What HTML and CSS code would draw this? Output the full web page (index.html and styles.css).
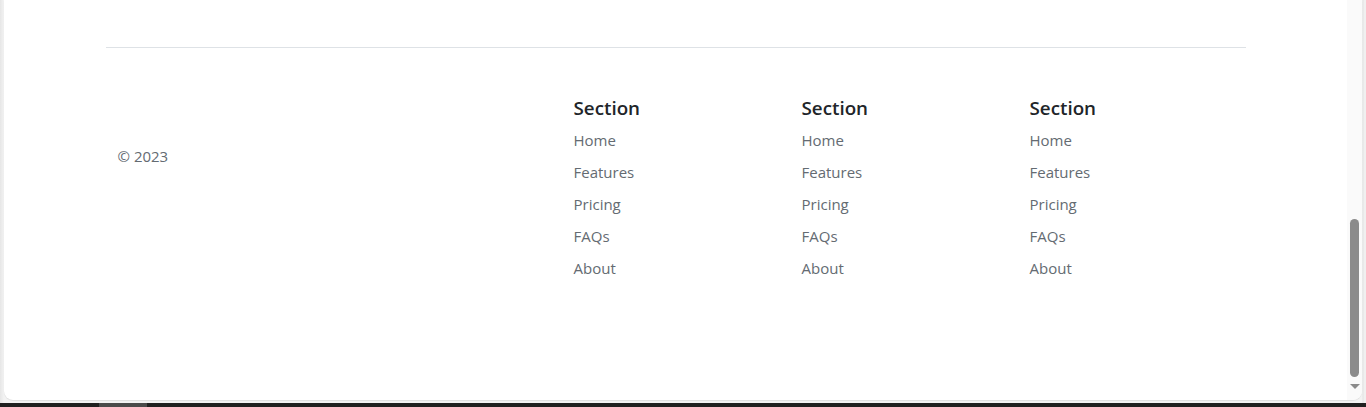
FILE: index.html
```html
<!DOCTYPE html>
<html lang="en">
<head>
<meta charset="utf-8">
<title>Footer</title>
<link rel="stylesheet" href="styles.css">
</head>
<body>
<div class="window">
  <div class="content">
    <div class="container">
      <footer class="footer">
        <div class="col">
          <div class="logo-space"></div>
          <p class="muted">© 2023</p>
        </div>
        <div class="col"></div>
        <div class="col">
          <h5 class="heading">Section</h5>
          <ul class="nav">
            <li><a href="#">Home</a></li>
            <li><a href="#">Features</a></li>
            <li><a href="#">Pricing</a></li>
            <li><a href="#">FAQs</a></li>
            <li><a href="#">About</a></li>
          </ul>
        </div>
        <div class="col">
          <h5 class="heading">Section</h5>
          <ul class="nav">
            <li><a href="#">Home</a></li>
            <li><a href="#">Features</a></li>
            <li><a href="#">Pricing</a></li>
            <li><a href="#">FAQs</a></li>
            <li><a href="#">About</a></li>
          </ul>
        </div>
        <div class="col">
          <h5 class="heading">Section</h5>
          <ul class="nav">
            <li><a href="#">Home</a></li>
            <li><a href="#">Features</a></li>
            <li><a href="#">Pricing</a></li>
            <li><a href="#">FAQs</a></li>
            <li><a href="#">About</a></li>
          </ul>
        </div>
      </footer>
    </div>
  </div>
  <div class="scrollbar">
    <div class="thumb"></div>
    <div class="arrow"></div>
  </div>
</div>
<div class="taskbar"><div class="task"></div></div>
</body>
</html>
```
FILE: styles.css
```css
html, body {
  margin: 0;
  padding: 0;
}
body {
  width: 1366px;
  height: 407px;
  overflow: hidden;
  background: linear-gradient(to right, #e6e6e6 0, #f3f3f3 4px, #f3f3f3 1362px, #e2e2e2 1363px, #f0f0f0 1364px);
  font-family: "Open Sans", "Noto Sans", sans-serif;
  color: #212529;
}
.window {
  margin-left: 4px;
  width: 1358px;
  height: 400px;
  background: #fff;
  border-radius: 0 0 9px 9px;
  box-shadow: 0 1px 1px rgba(0,0,0,0.08);
  display: flex;
  overflow: hidden;
}
.content {
  flex: 1;
  padding-top: 47px;
}
.container {
  width: 1140px;
  margin: 0 auto;
}
.footer {
  display: grid;
  grid-template-columns: repeat(5, 1fr);
  border-top: 1px solid #dee2e6;
  padding-top: 48px;
}
.col {
  padding: 0 12px;
}
.logo-space {
  height: 32px;
  margin-bottom: 16px;
}
.muted {
  margin: 0;
  color: #646b72;
  font-size: 15px;
  line-height: 24px;
}
.heading {
  margin: 0 0 8px;
  font-size: 18.8px;
  line-height: 24px;
  font-weight: 600;
  color: #212529;
}
.nav {
  list-style: none;
  margin: 0;
  padding: 0;
  display: flex;
  flex-direction: column;
  gap: 8px;
}
.nav a {
  display: block;
  color: #646b72;
  text-decoration: none;
  font-size: 15px;
  line-height: 24px;
}
.scrollbar {
  width: 15px;
  background: #fafafa;
  display: flex;
  flex-direction: column;
  align-items: center;
}
.thumb {
  margin-top: 219px;
  width: 9px;
  height: 158px;
  background: #8b8b8b;
  border-radius: 5px;
}
.arrow {
  margin-top: 7px;
  width: 0;
  height: 0;
  border-left: 5px solid transparent;
  border-right: 5px solid transparent;
  border-top: 5px solid #8b8b8b;
}
.taskbar {
  margin-top: 3px;
  height: 4px;
  background: #202020;
}
.task {
  margin-left: 99px;
  width: 48px;
  height: 4px;
  background: #4a4a4a;
}
```
